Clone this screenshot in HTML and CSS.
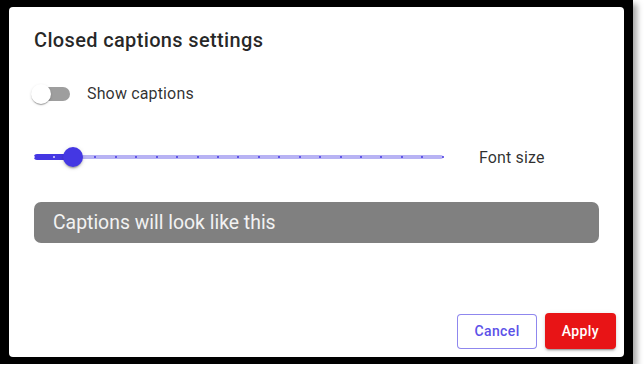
FILE: index.html
```html
<!DOCTYPE html>
<html lang="en">
<head>
<meta charset="utf-8">
<title>Closed captions settings</title>
<link rel="stylesheet" href="styles.css">
</head>
<body>
<div class="frame">
  <div class="dialog">
    <h2 class="title">Closed captions settings</h2>
    <div class="content">
      <label class="toggle-row">
        <span class="switch">
          <span class="switch-track"></span>
          <span class="switch-thumb"></span>
        </span>
        <span class="label">Show captions</span>
      </label>
      <div class="slider-row">
        <div class="slider">
          <span class="rail"></span>
          <span class="track"></span>
          <div class="marks">
            <span class="mark on"></span><span class="mark on"></span><span class="mark on"></span><span class="mark"></span><span class="mark"></span><span class="mark"></span><span class="mark"></span><span class="mark"></span><span class="mark"></span><span class="mark"></span><span class="mark"></span><span class="mark"></span><span class="mark"></span><span class="mark"></span><span class="mark"></span><span class="mark"></span><span class="mark"></span><span class="mark"></span><span class="mark"></span><span class="mark"></span><span class="mark"></span>
          </div>
          <span class="thumb"></span>
        </div>
        <span class="label">Font size</span>
      </div>
      <div class="preview">Captions will look like this</div>
    </div>
    <div class="actions">
      <button class="btn btn-outlined">Cancel</button>
      <button class="btn btn-contained">Apply</button>
    </div>
  </div>
</div>
</body>
</html>
```
FILE: styles.css
```css
html, body {
  margin: 0;
  padding: 0;
  background: #ffffff;
}
body {
  font-family: Roboto, "Liberation Sans", Arial, sans-serif;
  color: rgba(0, 0, 0, 0.87);
}
.frame {
  width: 633px;
  height: 364px;
  box-sizing: border-box;
  padding: 7px 9px 7px 9px;
  background: #000;
  box-shadow: 4px 4px 6px rgba(0, 0, 0, 0.35);
}
.dialog {
  width: 615px;
  height: 350px;
  background: #fff;
  border-radius: 4px;
  display: flex;
  flex-direction: column;
}
.title {
  margin: 0;
  padding: 17px 25px 0;
  font-size: 20px;
  font-weight: 500;
  line-height: 32px;
  letter-spacing: 0.35px;
  color: rgba(0, 0, 0, 0.85);
}
.content {
  padding: 0 25px;
  display: flex;
  flex-direction: column;
}
.label {
  font-size: 16px;
  line-height: 24px;
  letter-spacing: 0.15px;
  color: rgba(0, 0, 0, 0.82);
}
.toggle-row {
  margin-top: 19px;
  height: 38px;
  display: flex;
  align-items: center;
  gap: 16px;
}
.switch {
  position: relative;
  width: 40px;
  height: 20px;
  margin-left: -3px;
}
.switch-track {
  position: absolute;
  left: 3px;
  top: 3px;
  width: 36px;
  height: 14px;
  border-radius: 7px;
  background: #9e9e9e;
}
.switch-thumb {
  position: absolute;
  left: 0;
  top: 0;
  width: 20px;
  height: 20px;
  border-radius: 50%;
  background: #fff;
  box-shadow: 0 2px 1px -1px rgba(0,0,0,0.2), 0 1px 1px 0 rgba(0,0,0,0.14), 0 1px 3px 0 rgba(0,0,0,0.12);
}
.slider-row {
  margin-top: 30px;
  height: 28px;
  display: flex;
  align-items: center;
  gap: 36px;
}
.slider-row .label {
  margin-top: 2px;
}
.slider {
  position: relative;
  width: 409px;
  height: 20px;
  color: #4437e3;
}
.rail {
  position: absolute;
  left: 0;
  right: 0;
  top: 8px;
  height: 4px;
  border-radius: 2px;
  background: #b8b3f4;
}
.track {
  position: absolute;
  left: 0;
  top: 7px;
  width: 40px;
  height: 6px;
  border-radius: 3px;
  background: #4437e3;
}
.marks {
  position: absolute;
  left: -1px;
  right: -1px;
  top: 9px;
  height: 2px;
  display: flex;
  justify-content: space-between;
}
.mark {
  width: 2px;
  height: 2px;
  border-radius: 1px;
  background: #4437e3;
}
.mark.on {
  background: rgba(255, 255, 255, 0.8);
}
.thumb {
  position: absolute;
  left: 29px;
  top: 0;
  width: 20px;
  height: 20px;
  border-radius: 50%;
  background: #4437e3;
  box-shadow: 0 3px 1px -2px rgba(0,0,0,0.2), 0 2px 2px 0 rgba(0,0,0,0.14), 0 1px 5px 0 rgba(0,0,0,0.12);
}
.preview {
  margin-top: 31px;
  height: 41px;
  box-sizing: border-box;
  padding: 0 19px;
  border-radius: 7px;
  background: #808080;
  color: #f2f2f2;
  font-size: 19.4px;
  line-height: 41px;
  letter-spacing: 0;
}
.actions {
  margin-top: auto;
  padding: 8px;
  display: flex;
  justify-content: flex-end;
  align-items: flex-end;
  gap: 8px;
}
.btn {
  font-family: Roboto, "Liberation Sans", Arial, sans-serif;
  font-size: 14px;
  font-weight: 500;
  line-height: 23px;
  letter-spacing: 0.4px;
  border-radius: 4px;
  cursor: pointer;
  margin: 0;
}
.btn-outlined {
  padding: 5px 16px;
  border: 1px solid rgba(68, 55, 227, 0.6);
  background: #fff;
  color: #5c51e8;
}
.btn-contained {
  padding: 7px 17px 6px;
  border: none;
  background: #e81416;
  color: #fff;
  box-shadow: 0 3px 1px -2px rgba(0,0,0,0.2), 0 2px 2px 0 rgba(0,0,0,0.14), 0 1px 5px 0 rgba(0,0,0,0.12);
}
```
